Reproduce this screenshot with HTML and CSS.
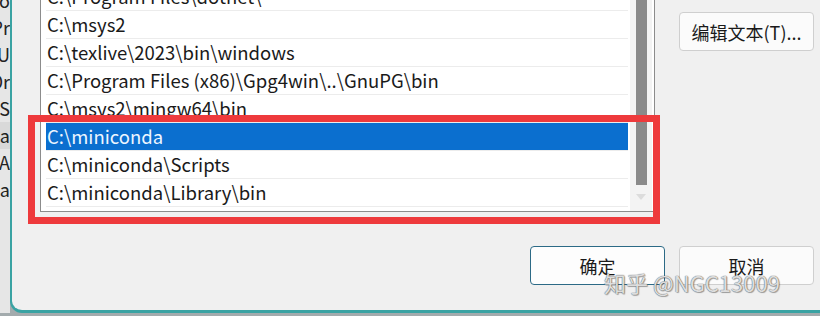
FILE: index.html
```html
<!DOCTYPE html>
<html lang="zh-CN">
<head>
    <meta charset="UTF-8">
    <title>编辑环境变量</title>
    <link rel="stylesheet" href="styles.css">
</head>
<body>
    <div class="screen">
        <div class="behind">
            <div class="behind-row">Go</div>
            <div class="behind-row">Pr</div>
            <div class="behind-row">NU</div>
            <div class="behind-row">Or</div>
            <div class="behind-row">oS</div>
            <div class="behind-row current">a</div>
            <div class="behind-row">A</div>
            <div class="behind-row">Ia</div>
        </div>

        <div class="dialog">
            <div class="main">
                <div class="listbox">
                    <ul class="items">
                        <li>C:\Program Files\dotnet\</li>
                        <li>C:\msys2</li>
                        <li>C:\texlive\2023\bin\windows</li>
                        <li>C:\Program Files (x86)\Gpg4win\..\GnuPG\bin</li>
                        <li>C:\msys2\mingw64\bin</li>
                        <li class="selected">C:\miniconda</li>
                        <li>C:\miniconda\Scripts</li>
                        <li>C:\miniconda\Library\bin</li>
                    </ul>
                    <div class="scrollbar">
                        <div class="thumb"></div>
                        <svg class="arrow" width="10" height="6" viewBox="0 0 10 6"><path d="M0 0 L10 0 L5 6 Z" fill="#dcdcdc"/></svg>
                    </div>
                </div>
                <div class="side">
                    <button class="btn">编辑文本(T)...</button>
                </div>
            </div>

            <div class="footer">
                <button class="btn default">确定</button>
                <button class="btn">取消</button>
            </div>

            <div class="highlight"></div>
            <div class="watermark">知乎 @NGC13009</div>
        </div>
    </div>
</body>
</html>
```

FILE: styles.css
```css
* {
    box-sizing: border-box;
}
body {
    margin: 0;
    width: 820px;
    height: 316px;
    overflow: hidden;
    background-color: #a3abad;
    font-family: "Noto Sans CJK SC", "Noto Sans", sans-serif;
    color: #1a1a1a;
}
.screen {
    display: flex;
    height: 313px;
}
.behind {
    width: 10px;
    flex-shrink: 0;
    background-color: #e6e6e6;
    overflow: hidden;
    margin-top: -13px;
}
.behind-row {
    height: 27px;
    line-height: 27px;
    font-size: 18px;
    display: flex;
    justify-content: flex-end;
    white-space: nowrap;
    color: #222;
}
.behind-row.current {
    background-color: #d9d9d9;
}
.dialog {
    position: relative;
    flex: 1;
    background-color: #f0f0f0;
    border-left: 2px solid #3aa3a3;
    border-bottom: 3px solid #3aa3a3;
    border-bottom-left-radius: 12px;
    padding-left: 28px;
    overflow: hidden;
}
.main {
    display: flex;
    gap: 24px;
}
.listbox {
    display: flex;
    width: 615px;
    height: 229px;
    margin-top: -17px;
    background-color: #fff;
    border-left: 1px solid #8c8c8c;
    border-right: 1px solid #8c8c8c;
    border-bottom: 1px solid #8c8c8c;
    padding-left: 5px;
}
.items {
    list-style: none;
    margin: 0;
    padding: 0;
    width: 582px;
}
.items li {
    height: 28px;
    line-height: 27px;
    font-size: 18.5px;
    padding-left: 1px;
    border-bottom: 1px solid #ececec;
    white-space: nowrap;
}
.items li.selected {
    background-color: #0b6fcf;
    color: #eef6ff;
}
.scrollbar {
    width: 22px;
    margin-left: 2px;
    background-color: #f3f3f3;
    display: flex;
    flex-direction: column;
    align-items: center;
}
.thumb {
    width: 11px;
    height: 202px;
    background-color: #8a8a8a;
}
.arrow {
    margin-top: 9px;
}
.side {
    padding-top: 12px;
}
.btn {
    width: 135px;
    height: 39px;
    background-color: #fbfbfb;
    border: 1px solid #cfcfcf;
    border-radius: 4px;
    font-family: "Noto Sans CJK SC", "Noto Sans", sans-serif;
    font-size: 18px;
    color: #1a1a1a;
    padding: 0;
}
.btn.default {
    background-color: #fdfdfd;
    border-color: #2c6a86;
}
.footer {
    display: flex;
    justify-content: flex-end;
    gap: 14px;
    margin-top: 34px;
    padding-right: 6px;
}
.highlight {
    position: absolute;
    left: 16px;
    top: 115px;
    width: 632px;
    height: 109px;
    border: 7px solid #ee3a3c;
}
.watermark {
    position: absolute;
    left: 592px;
    top: 266px;
    font-size: 22px;
    color: rgba(255, 255, 255, 0.8);
    text-shadow: 0 0 1px #666, 0 0 1px #666, 1px 1px 1px rgba(0,0,0,0.3);
    white-space: nowrap;
}
```
